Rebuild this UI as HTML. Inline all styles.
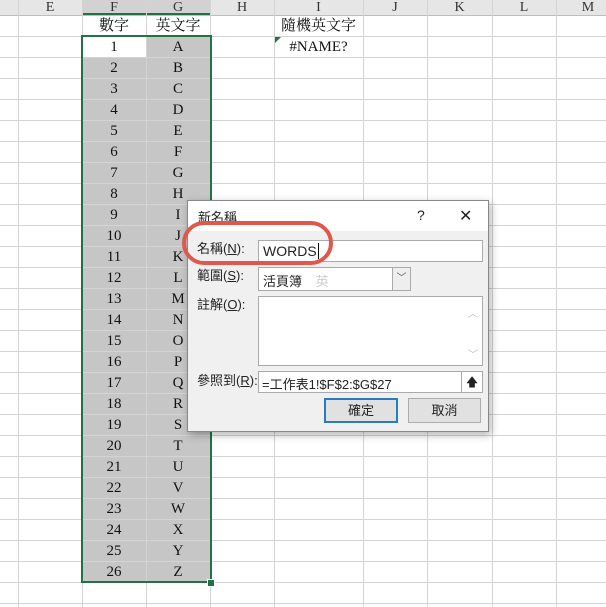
<!DOCTYPE html>
<html><head><style>
body{margin:0;width:606px;height:607px;overflow:hidden;background:#fff;font-family:"Liberation Serif","Noto Serif CJK SC",serif;position:relative}
.a{position:absolute}
.hdr{position:absolute;top:0;left:0;width:606px;height:15px;background:#e6e6e6;border-bottom:1px solid #bdbdbd}
.vl{position:absolute;width:1px;background:#d4d4d4;top:0;height:607px}
.hl{position:absolute;height:1px;background:#d4d4d4;left:0;width:606px}
.ch{position:absolute;top:0;height:15px;line-height:15px;font-size:14px;text-align:center;color:#333}
.c{position:absolute;height:21px;line-height:22px;font-size:15px;text-align:center;color:#111}
.dlg{font-family:"Liberation Sans","Noto Sans CJK TC",sans-serif;font-size:13px;color:#222}
.box{position:absolute;background:#fff;border:1px solid #aaa;box-sizing:border-box}
</style></head><body>
<div class="hdr"></div>
<div class="a" style="left:82px;top:0;width:129px;height:15px;background:#d2d2d2;border-bottom:2px solid #217346;box-sizing:border-box"></div>
<div class="a" style="left:82px;top:36px;width:129px;height:546px;background:#c6c6c6"></div>
<div class="a" style="left:82px;top:36px;width:64px;height:21px;background:#fff"></div>
<div id="grid"></div>
<div class="a" style="left:81px;top:35px;width:127px;height:544px;border:2px solid #217346"></div>
<div class="a" style="left:207px;top:579px;width:6px;height:6px;background:#217346;border:1px solid #fff"></div>
<div class="a" style="left:275px;top:37px;width:0;height:0;border-top:6px solid #217346;border-right:6px solid transparent"></div>
<div class="c" style="left:274px;top:15px;width:89px">隨機英文字</div>
<div class="c" style="left:274px;top:36px;width:89px">#NAME?</div>
<div class="c" style="left:82px;top:15px;width:64px">數字</div>
<div class="c" style="left:146px;top:15px;width:64px">英文字</div>

<div class="a dlg" style="left:187px;top:200px;width:302px;height:232px;background:#f0f0f0;border:1px solid #888;box-sizing:border-box;box-shadow:2px 3px 8px rgba(0,0,0,.3)">
 <div class="a" style="left:0;top:0;width:300px;height:30px;background:#fff"></div>
 <div class="a" style="left:10px;top:6px">新名稱</div>
 <div class="a" style="left:229px;top:6px;font-size:14px">?</div>
 <div class="a" style="left:271px;top:5px;font-size:16px;font-weight:300">✕</div>
 <div class="a" style="left:9px;top:37px">名稱(<u>N</u>):</div>
 <div class="box" style="left:70px;top:39px;width:225px;height:22px;padding:2px 0 0 4px;font-size:14px">WORDS<span style="border-left:1px solid #000;margin-left:1px"></span></div>
 <div class="a" style="left:9px;top:64px">範圍(<u>S</u>):</div>
 <div class="box" style="left:70px;top:66px;width:153px;height:24px;padding:3px 0 0 4px">活頁簿 <span style="color:#ccc;margin-left:10px">英</span><div class="a" style="right:0;top:0;width:17px;height:22px;border-left:1px solid #aaa;background:#eee;text-align:center;font-size:10px;line-height:22px;color:#555">﹀</div></div>
 <div class="a" style="left:9px;top:93px">註解(<u>O</u>):</div>
 <div class="box" style="left:70px;top:95px;width:225px;height:70px"><div class="a" style="right:4px;top:8px;color:#bbb;font-size:10px">︿</div><div class="a" style="right:4px;bottom:4px;color:#bbb;font-size:10px">﹀</div></div>
 <div class="a" style="left:9px;top:169px">參照到(<u>R</u>):</div>
 <div class="box" style="left:70px;top:170px;width:225px;height:22px;padding:2px 0 0 3px">=工作表1!$F$2:$G$27<div class="a" style="right:0;top:0;width:20px;height:20px;border-left:1px solid #aaa;text-align:center;font-size:12px;line-height:20px">🡅</div></div>
 <div class="a" style="left:136px;top:197px;width:74px;height:25px;background:#e1e1e1;border:2px solid #2b7bc0;box-sizing:border-box;text-align:center;line-height:21px">確定</div>
 <div class="a" style="left:220px;top:197px;width:73px;height:25px;background:#e1e1e1;border:1px solid #adadad;box-sizing:border-box;text-align:center;line-height:23px">取消</div>
</div>
<div class="a" style="left:182px;top:221px;width:151px;height:44px;border:4px solid #e0584c;border-radius:22px;box-sizing:border-box"></div>
<script>
var g=document.getElementById('grid'),h='';
var xs=[18,82,146,210,274,363,427,492,556];
xs.forEach(function(x){h+='<div class="vl" style="left:'+x+'px"></div>'});
for(var y=36;y<607;y+=21)h+='<div class="hl" style="top:'+y+'px"></div>';
var cols=['E','F','G','H','I','J','K','L','M'],cx=[18,82,146,210,274,363,427,492,556,620];
for(var i=0;i<9;i++)h+='<div class="ch" style="left:'+cx[i]+'px;width:'+(cx[i+1]-cx[i])+'px">'+cols[i]+'</div>';
for(var r=0;r<26;r++){var t=36+r*21;h+='<div class="c" style="left:82px;top:'+t+'px;width:64px">'+(r+1)+'</div><div class="c" style="left:146px;top:'+t+'px;width:64px">'+String.fromCharCode(65+r)+'</div>';}
g.innerHTML=h;
</script>
</body></html>
